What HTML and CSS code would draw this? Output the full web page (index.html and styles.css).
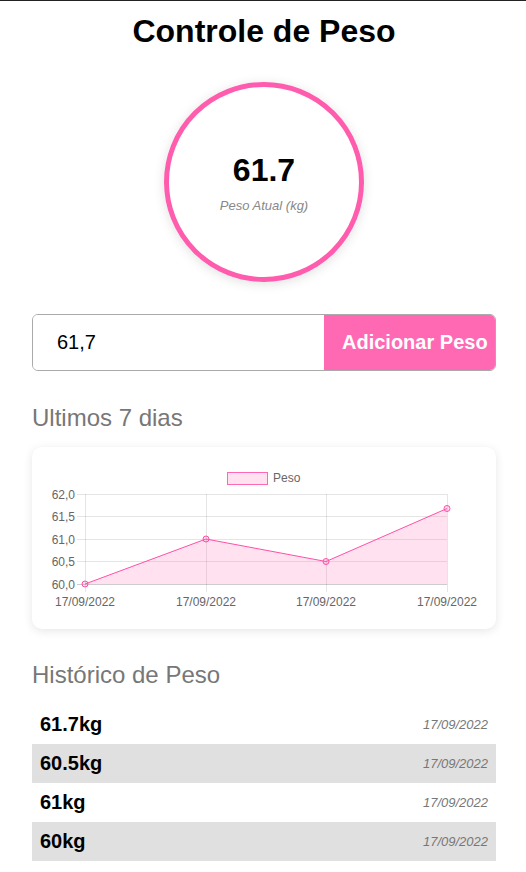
FILE: index.html
```html
<!DOCTYPE html>
<html lang="pt-BR">
<head>
<meta charset="utf-8">
<title>Controle de Peso</title>
<link rel="stylesheet" href="styles.css">
</head>
<body>
<div class="app">
  <h1 class="title">Controle de Peso</h1>
  <div class="circle-wrap">
    <div class="circle">
      <div class="current">61.7</div>
      <div class="current-label">Peso Atual (kg)</div>
    </div>
  </div>
  <form class="add-form">
    <input class="weight-input" type="text" value="61,7">
    <button class="add-btn" type="button">Adicionar Peso</button>
  </form>
  <h2 class="section-title">Ultimos 7 dias</h2>
  <div class="chart-card">
    <svg class="chart" width="464" height="182" viewBox="0 0 464 182" xmlns="http://www.w3.org/2000/svg">
      <g stroke="rgba(0,0,0,0.1)" stroke-width="1">
        <line x1="45" y1="47.5" x2="415" y2="47.5"/>
        <line x1="45" y1="69.5" x2="415" y2="69.5"/>
        <line x1="45" y1="92.5" x2="415" y2="92.5"/>
        <line x1="45" y1="114.5" x2="415" y2="114.5"/>
        <line x1="45" y1="137.5" x2="415" y2="137.5" stroke="rgba(0,0,0,0.2)"/>
        <line x1="53.5" y1="47" x2="53.5" y2="145"/>
        <line x1="174.5" y1="47" x2="174.5" y2="145"/>
        <line x1="294.5" y1="47" x2="294.5" y2="145"/>
        <line x1="415.5" y1="47" x2="415.5" y2="145"/>
      </g>
      <g font-family="'Liberation Sans', Arial, sans-serif" font-size="12" fill="#666">
        <text x="43" y="51.5" text-anchor="end">62,0</text>
        <text x="43" y="74" text-anchor="end">61,5</text>
        <text x="43" y="96.5" text-anchor="end">61,0</text>
        <text x="43" y="119" text-anchor="end">60,5</text>
        <text x="43" y="141.5" text-anchor="end">60,0</text>
        <text x="53" y="159" text-anchor="middle">17/09/2022</text>
        <text x="174" y="159" text-anchor="middle">17/09/2022</text>
        <text x="294" y="159" text-anchor="middle">17/09/2022</text>
        <text x="415" y="159" text-anchor="middle">17/09/2022</text>
        <text x="241" y="35">Peso</text>
      </g>
      <rect x="195.5" y="25.5" width="40" height="12" fill="rgba(255,105,180,0.2)" stroke="#ff69b4" stroke-width="1"/>
      <polygon points="53,137 174,92 294,114.5 415,61.5 415,137" fill="rgba(255,105,180,0.2)"/>
      <polyline points="53,137 174,92 294,114.5 415,61.5" fill="none" stroke="#ff4fa8" stroke-width="1"/>
      <g fill="rgba(255,105,180,0.2)" stroke="#ff4fa8" stroke-width="1">
        <circle cx="53" cy="137" r="3"/>
        <circle cx="174" cy="92" r="3"/>
        <circle cx="294" cy="114.5" r="3"/>
        <circle cx="415" cy="61.5" r="3"/>
      </g>
    </svg>
  </div>
  <h2 class="section-title history-title">Histórico de Peso</h2>
  <ul class="history">
    <li class="history-row"><span class="h-weight">61.7kg</span><span class="h-date">17/09/2022</span></li>
    <li class="history-row alt"><span class="h-weight">60.5kg</span><span class="h-date">17/09/2022</span></li>
    <li class="history-row"><span class="h-weight">61kg</span><span class="h-date">17/09/2022</span></li>
    <li class="history-row alt"><span class="h-weight">60kg</span><span class="h-date">17/09/2022</span></li>
  </ul>
</div>
</body>
</html>
```

FILE: styles.css
```css
* {
  box-sizing: border-box;
}

html, body {
  margin: 0;
  padding: 0;
  background: #fff;
}

body {
  border-top: 1px solid #222;
  font-family: "Liberation Sans", Arial, sans-serif;
  color: #000;
}

.app {
  margin: 0 30px 0 32px;
  display: flex;
  flex-direction: column;
}

.title {
  margin: 12px 0 0;
  font-size: 32px;
  font-weight: bold;
  line-height: 37px;
  text-align: center;
}

.circle-wrap {
  display: flex;
  justify-content: center;
  margin-top: 32px;
}

.circle {
  width: 200px;
  height: 200px;
  border-radius: 50%;
  border: 5px solid #ff5cad;
  box-shadow: 0 2px 12px rgba(0, 0, 0, 0.12);
  display: flex;
  flex-direction: column;
  align-items: center;
  justify-content: center;
  gap: 9px;
}

.current {
  font-size: 32px;
  font-weight: bold;
  line-height: 37px;
  margin-top: 1px;
}

.current-label {
  font-size: 13px;
  font-style: italic;
  color: #888;
  line-height: 15px;
}

.add-form {
  margin-top: 32px;
  height: 57px;
  display: flex;
  border: 1px solid #aaa;
  border-radius: 6px;
  overflow: hidden;
}

.weight-input {
  flex: 1;
  min-width: 0;
  border: none;
  outline: none;
  padding: 0 0 0 24px;
  font-family: "Liberation Sans", Arial, sans-serif;
  font-size: 20px;
  color: #000;
  background: #fff;
}

.add-btn {
  width: 171px;
  border: none;
  background: #ff69b4;
  color: #fff;
  font-family: "Liberation Sans", Arial, sans-serif;
  font-size: 20px;
  font-weight: bold;
  padding: 0 6px 0 18px;
  text-align: left;
  white-space: nowrap;
}

.section-title {
  margin: 33px 0 0;
  font-size: 24px;
  font-weight: normal;
  line-height: 27px;
  color: #777;
}

.chart-card {
  margin-top: 16px;
  height: 182px;
  border-radius: 10px;
  background: #fff;
  box-shadow: 0 2px 10px rgba(0, 0, 0, 0.1);
  overflow: hidden;
}

.chart {
  display: block;
}

.history-title {
  margin-top: 32px;
}

.history {
  list-style: none;
  margin: 17px 0 0;
  padding: 0;
}

.history-row {
  height: 39px;
  display: flex;
  align-items: center;
  justify-content: space-between;
  padding: 0 8px;
}

.history-row.alt {
  background: #e0e0e0;
}

.h-weight {
  font-size: 20px;
  font-weight: bold;
}

.h-date {
  font-size: 13px;
  font-style: italic;
  color: #777;
}
```
